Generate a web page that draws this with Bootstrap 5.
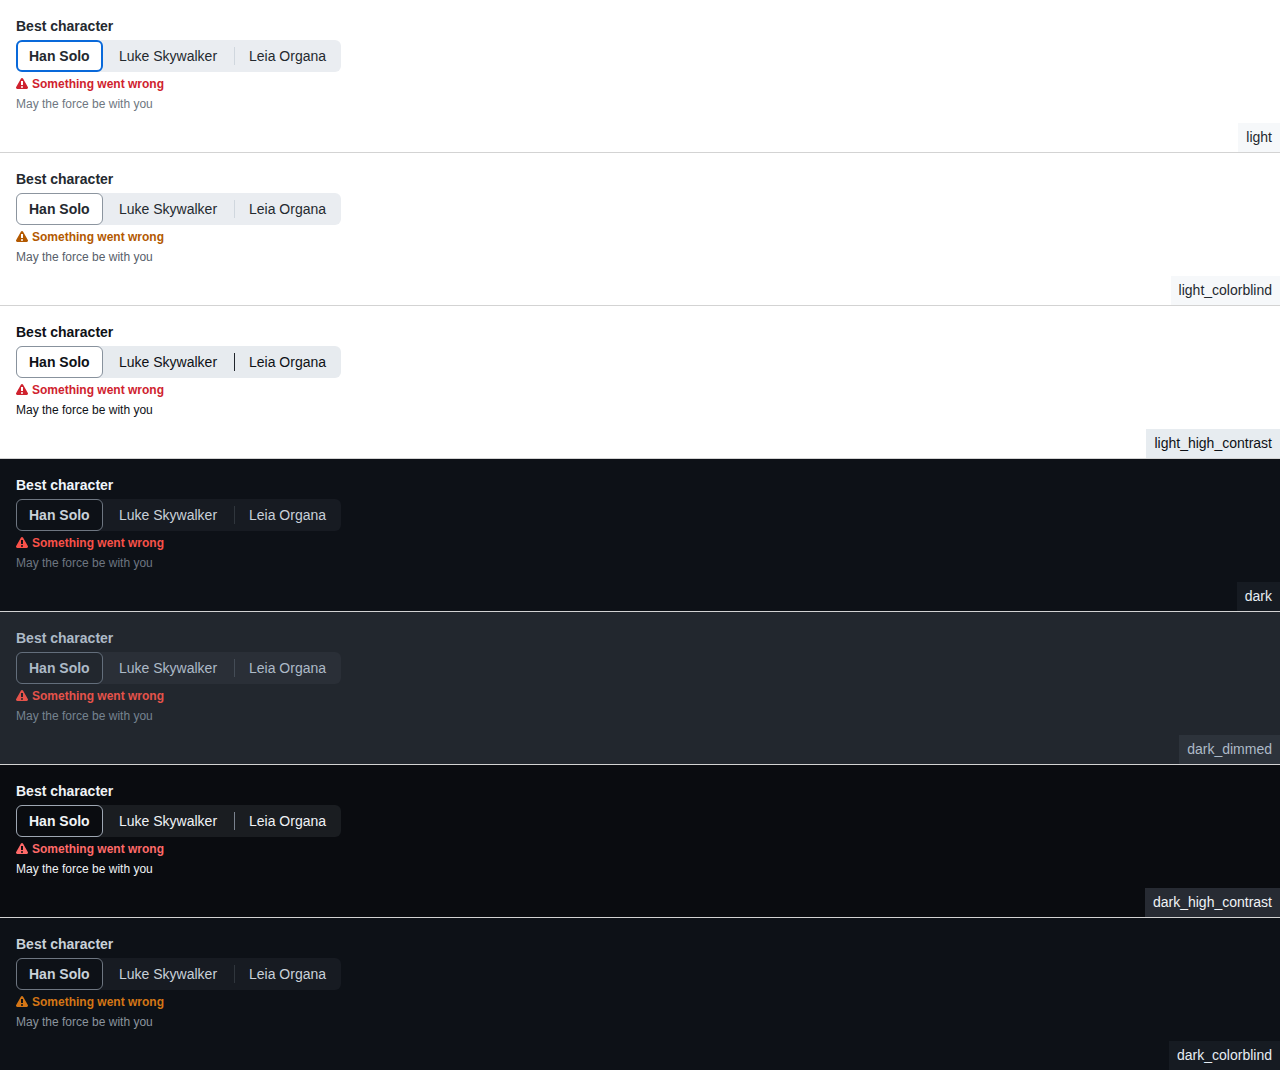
<!DOCTYPE html>
<html lang="en">
<head>
<meta charset="utf-8">
<meta name="viewport" content="width=device-width, initial-scale=1">
<title>Segmented control themes</title>
<link href="https://cdn.jsdelivr.net/npm/bootstrap@5.3.0/dist/css/bootstrap.min.css" rel="stylesheet">
<style>
body { font: 14px/21px "Liberation Sans", Arial, sans-serif; background: #0d1117; }
.theme { height: 153px; border-bottom: 1px solid #d3d3d3; background: var(--bg); color: var(--fg); }
.theme:last-child { height: 152px; border-bottom: 0; }
.field-title { line-height: 20px; margin-bottom: 4px; color: var(--head, var(--fg)); }
.segments { width: 325px; height: 32px; border-radius: 6px; background: var(--track); }
.segment { border: 0; background: none; color: inherit; padding: 0; text-align: left; line-height: 20px; }
.segment-one { width: 87px; padding-left: 12px; border: 1px solid var(--ring); border-radius: 6px; background: var(--bg); }
.segment-one.focused { border-width: 2px; padding-left: 11px; }
.segment-two { width: 131px; padding-left: 16px; }
.segment-three { width: 106px; padding-left: 14px; }
.divider { width: 1px; height: 18px; background: var(--line); }
.problem { font-size: 12px; line-height: 16px; margin-top: 4px; color: var(--alert); }
.hint { font-size: 12px; line-height: 16px; margin-top: 4px; color: var(--muted); }
.theme-name { padding: 4px 8px; background: var(--tag); color: var(--tagfg, var(--fg)); }
.t-light { --bg:#fff; --fg:#24292f; --track:#eaedf1; --ring:#0969da; --line:#d0d7de; --alert:#cf222e; --muted:#6e7781; --tag:#f6f8fa; }
.t-light-cb { --bg:#fff; --fg:#24292f; --track:#eaedf1; --ring:#8c959f; --line:#d0d7de; --alert:#b35900; --muted:#57606a; --tag:#f6f8fa; }
.t-light-hc { --bg:#fff; --fg:#0e1116; --track:#e7ebef; --ring:#88929d; --line:#20252c; --alert:#cf222e; --muted:#0e1116; --tag:#e7ecf0; }
.t-dark { --bg:#0d1117; --fg:#c9d1d9; --head:#f0f6fc; --track:#171b22; --ring:#6e7681; --line:#30363d; --alert:#f85149; --muted:#6e7681; --tag:#161b22; --tagfg:#e6edf3; }
.t-dimmed { --bg:#22272e; --fg:#adbac7; --track:#2a2f37; --ring:#636e7b; --line:#444c56; --alert:#e5534b; --muted:#768390; --tag:#2d333b; }
.t-dark-hc { --bg:#0a0c10; --fg:#f0f3f6; --track:#1a1d21; --ring:#9ea7b3; --line:#7a828e; --alert:#ff6a69; --muted:#f0f3f6; --tag:#272b33; }
.t-dark-cb { --bg:#0d1117; --fg:#c9d1d9; --track:#171b22; --ring:#6e7681; --line:#30363d; --alert:#d47616; --muted:#8b949e; --tag:#161b22; --tagfg:#e6edf3; }
</style>
</head>
<body>
<svg class="d-none"><symbol id="alert" viewBox="0 0 12 12"><path fill="currentColor" d="M4.855.708c.5-.896 1.79-.896 2.29 0l4.675 8.351a1.312 1.312 0 0 1-1.146 1.954H1.33A1.313 1.313 0 0 1 .183 9.058ZM7 7V3H5v4Zm-1 3a1 1 0 1 0 0-2 1 1 0 0 0 0 2Z"/></symbol></svg>
<main id="themes"></main>
<script>
const themes = [["light","t-light"],["light_colorblind","t-light-cb"],["light_high_contrast","t-light-hc"],["dark","t-dark"],["dark_dimmed","t-dimmed"],["dark_high_contrast","t-dark-hc"],["dark_colorblind","t-dark-cb"]];
document.getElementById("themes").innerHTML = themes.map(([name, cls], i) => `
<section class="theme ${cls} d-flex justify-content-between">
  <div class="p-3">
    <div class="field-title fw-bold">Best character</div>
    <div class="segments d-flex align-items-stretch">
      <button class="segment segment-one fw-bold${i ? "" : " focused"}">Han Solo</button>
      <button class="segment segment-two">Luke Skywalker</button>
      <span class="divider align-self-center"></span>
      <button class="segment segment-three">Leia Organa</button>
    </div>
    <div class="problem fw-bold d-flex align-items-center gap-1"><svg width="12" height="12"><use href="#alert"/></svg><span>Something went wrong</span></div>
    <div class="hint">May the force be with you</div>
  </div>
  <div class="theme-name align-self-end">${name}</div>
</section>`).join("");
</script>
<script src="https://cdn.jsdelivr.net/npm/bootstrap@5.3.0/dist/js/bootstrap.bundle.min.js"></script>
</body>
</html>
